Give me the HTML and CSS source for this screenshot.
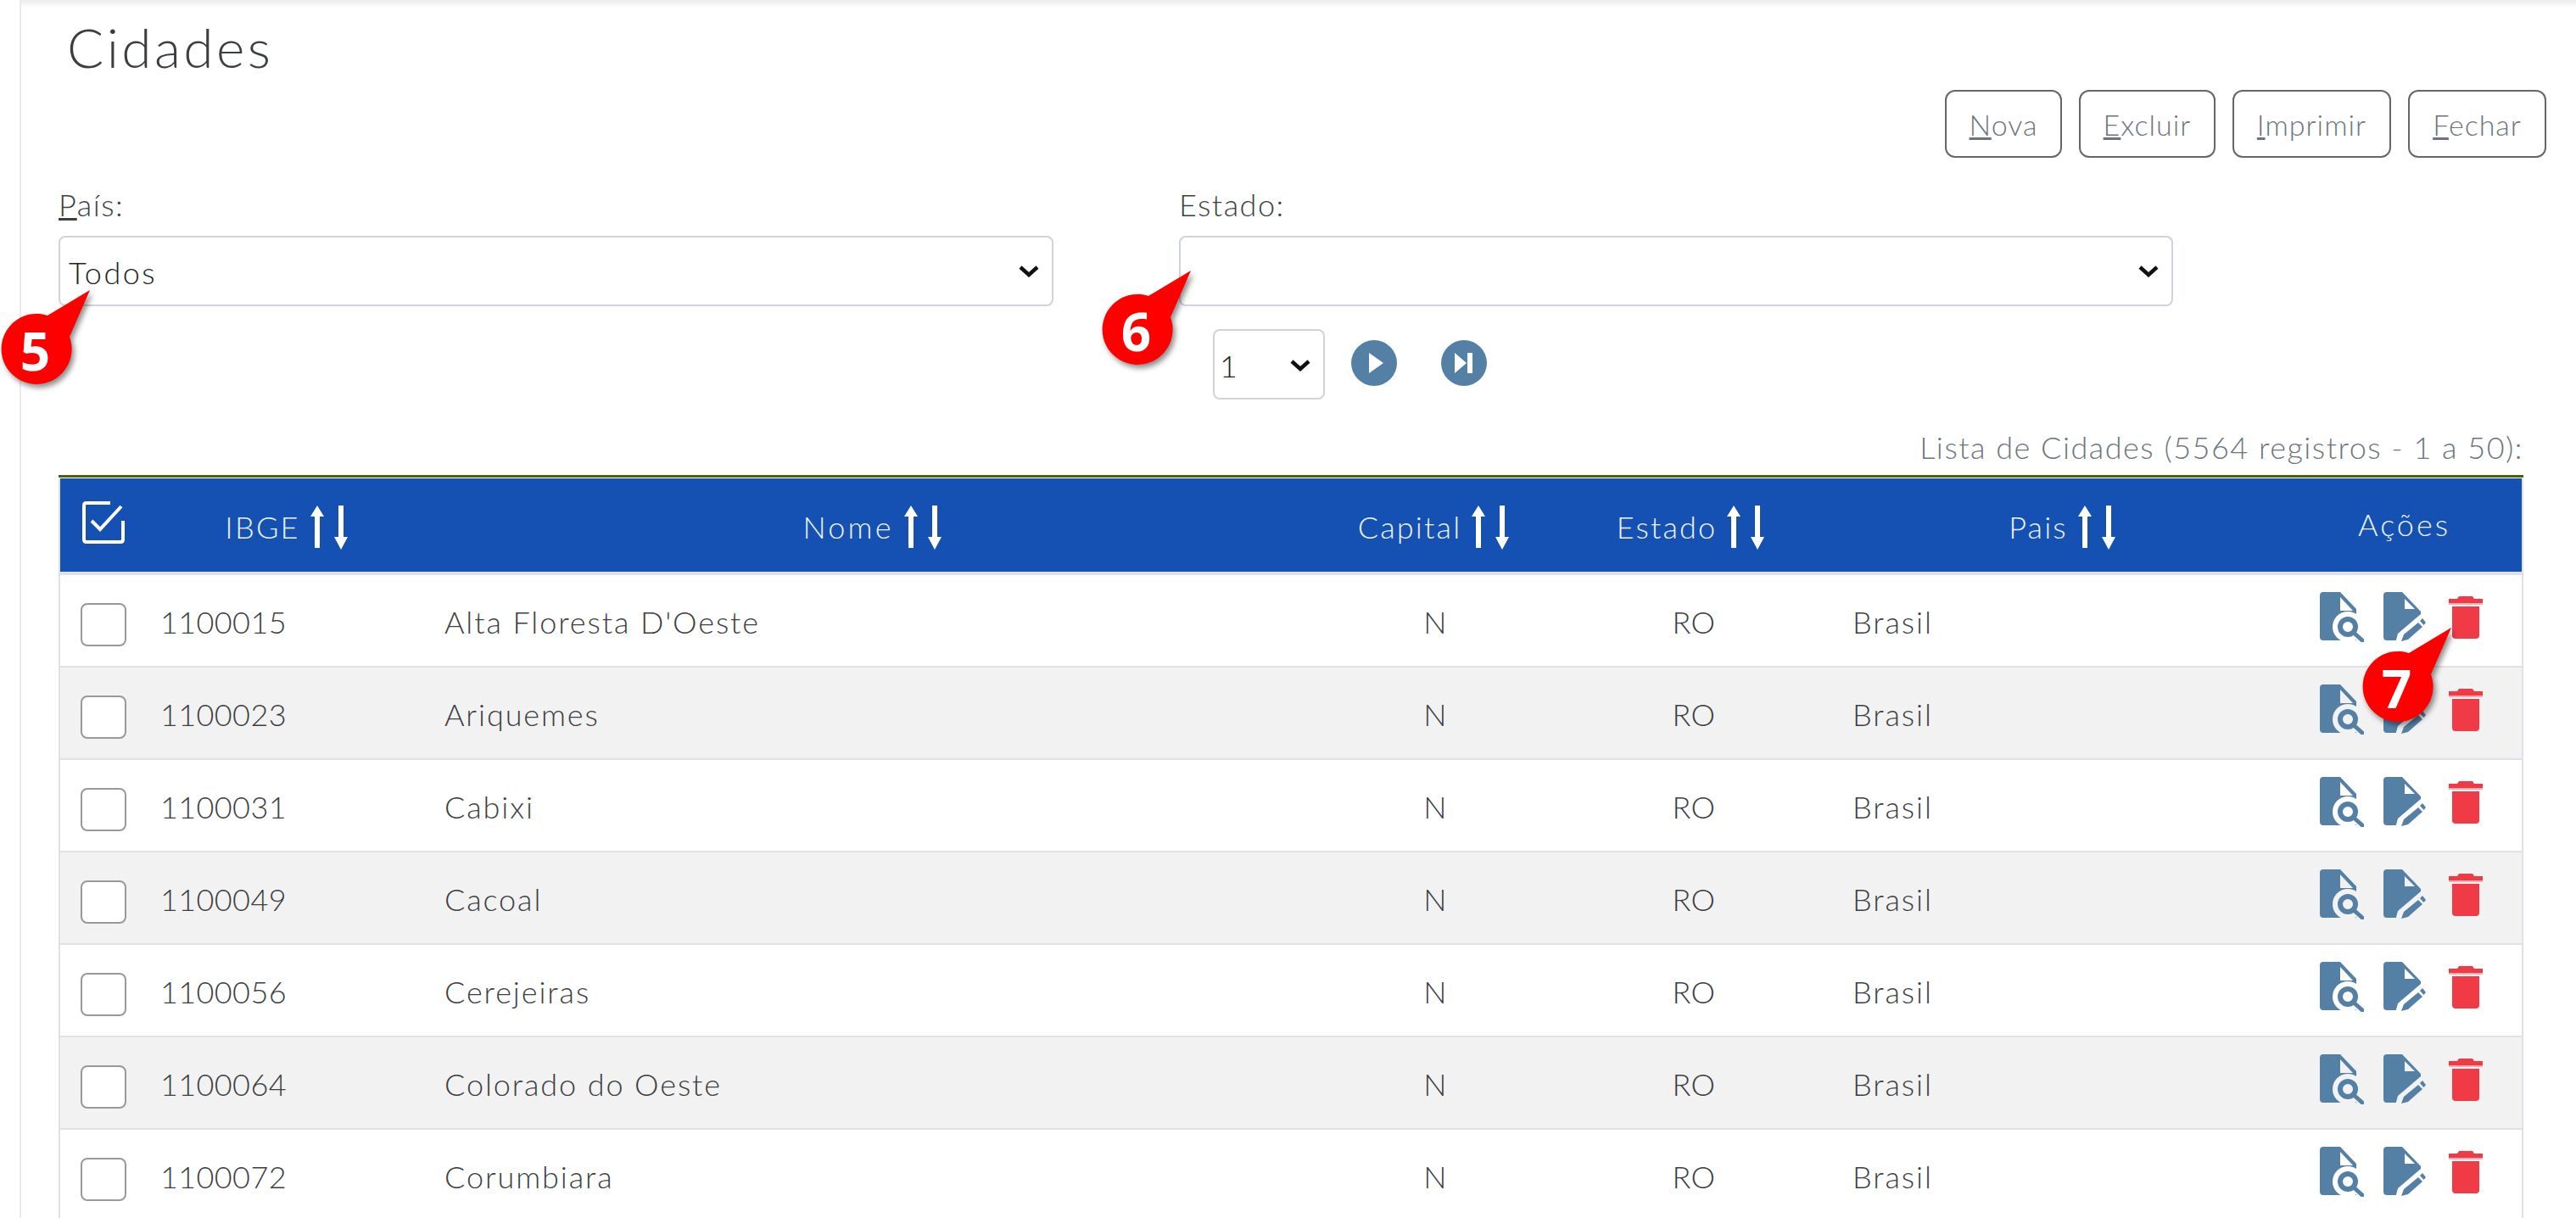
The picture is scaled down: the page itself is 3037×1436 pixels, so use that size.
FILE: index.html
```html
<!DOCTYPE html>
<html lang="pt-BR">
<head>
  <meta charset="UTF-8">
  <title>Cidades</title>
  <link rel="stylesheet" href="styles.css">
</head>
<body>
  <svg class="defs" width="0" height="0">
    <symbol id="i-up" viewBox="0 0 16 52"><path d="M8 0 16 13H11V50H5V13H0Z"/></symbol>
    <symbol id="i-down" viewBox="0 0 16 52"><path d="M5 0H11V37H16L8 52 0 37H5Z"/></symbol>
    <symbol id="i-chevron" viewBox="0 0 24 14"><path d="M2 2 12 11 22 2" fill="none" stroke="#111" stroke-width="4.5"/></symbol>
    <symbol id="i-search" viewBox="0 0 52 59">
      <path fill="#5580a6" d="M4 0H24L43 20V57H4Q0 57 0 53V4Q0 0 4 0Z"/>
      <path class="halo" d="M24 6V22H39Z"/>
      <circle class="halo" cx="33" cy="41" r="18"/>
      <path class="halo" d="M43 54 52 62V44H43Z"/>
      <circle cx="33" cy="41" r="9" fill="none" stroke="#5580a6" stroke-width="6"/>
      <path d="M40 48 50 57" fill="none" stroke="#5580a6" stroke-width="5" stroke-linecap="round"/>
    </symbol>
    <symbol id="i-edit" viewBox="0 0 50 59">
      <path fill="#5580a6" d="M4 0H22L44 23V57H4Q0 57 0 53V4Q0 0 4 0Z"/>
      <path class="halo" d="M25 8V20H37Z"/>
      <path class="halo" d="M14 60 17 49 44 26H52V63H14Z"/>
      <path d="M21 58 24 50 41 36 46 41 29 56Z" fill="#5580a6"/>
      <path d="M43 34 46 31 50 36 47.5 39Z" fill="#5580a6"/>
    </symbol>
    <symbol id="i-trash" viewBox="0 0 40 50">
      <path fill="#f03a45" d="M12 0H28L30 3H40V8H0V3H10Z"/>
      <path fill="#f7aab0" d="M0 8H40V10H0Z"/>
      <path fill="#f03a45" d="M4 12H36V46Q36 50 32 50H8Q4 50 4 46Z"/>
    </symbol>
  </svg>

  <main class="page">
    <h1 class="title">Cidades</h1>

    <div class="toolbar">
      <button class="btn btn-nova"><u>N</u>ova</button>
      <button class="btn btn-excluir"><u>E</u>xcluir</button>
      <button class="btn btn-imprimir"><u>I</u>mprimir</button>
      <button class="btn btn-fechar"><u>F</u>echar</button>
    </div>

    <div class="filters">
      <div class="field">
        <label for="pais"><u>P</u>aís:</label>
        <div class="select-box">
          <select id="pais"><option>Todos</option></select>
          <svg class="chevron"><use href="#i-chevron"/></svg>
        </div>
      </div>
      <div class="field">
        <label for="estado">Estado:</label>
        <div class="select-box">
          <select id="estado"><option></option></select>
          <svg class="chevron"><use href="#i-chevron"/></svg>
        </div>
      </div>
    </div>

    <div class="pager">
      <div class="select-box page-box">
        <select><option>1</option></select>
        <svg class="chevron"><use href="#i-chevron"/></svg>
      </div>
      <button class="round-btn" aria-label="Próxima">
        <svg viewBox="0 0 54 54"><path d="M21 15 38 27 21 39Z" fill="#fff"/></svg>
      </button>
      <button class="round-btn" aria-label="Última">
        <svg viewBox="0 0 54 54"><path d="M16 15 30 27 16 39ZM31 15H37V39H31Z" fill="#fff"/></svg>
      </button>
    </div>

    <p class="caption">Lista de Cidades (5564 registros - 1 a 50):</p>

    <div class="table-wrap">
      <table class="grid">
        <colgroup>
          <col class="c-check"><col class="c-ibge"><col class="c-nome"><col class="c-capital"><col class="c-estado"><col class="c-pais"><col class="c-acoes">
        </colgroup>
        <thead>
          <tr>
            <th class="check-head">
              <svg class="check-all" viewBox="0 0 50 50"><path d="M33 2H5Q2 2 2 5V45Q2 48 5 48H45Q48 48 48 45V23M11 23 21 33 46 6"/></svg>
            </th>
            <th class="h-ibge">IBGE<span class="sort"><svg><use href="#i-up"/></svg><svg><use href="#i-down"/></svg></span></th>
            <th class="h-nome">Nome<span class="sort"><svg><use href="#i-up"/></svg><svg><use href="#i-down"/></svg></span></th>
            <th class="h-capital">Capital<span class="sort"><svg><use href="#i-up"/></svg><svg><use href="#i-down"/></svg></span></th>
            <th class="h-estado">Estado<span class="sort"><svg><use href="#i-up"/></svg><svg><use href="#i-down"/></svg></span></th>
            <th class="h-pais">Pais<span class="sort"><svg><use href="#i-up"/></svg><svg><use href="#i-down"/></svg></span></th>
            <th class="h-acoes">Ações</th>
          </tr>
        </thead>
        <tbody>
          <tr>
            <td><input class="row-check" type="checkbox"></td><td class="code">1100015</td><td>Alta Floresta D'Oeste</td><td class="mid">N</td><td class="mid">RO</td><td>Brasil</td>
            <td class="actions"><svg class="a-search"><use href="#i-search"/></svg><svg class="a-edit"><use href="#i-edit"/></svg><svg class="a-trash"><use href="#i-trash"/></svg></td>
          </tr>
          <tr>
            <td><input class="row-check" type="checkbox"></td><td class="code">1100023</td><td>Ariquemes</td><td class="mid">N</td><td class="mid">RO</td><td>Brasil</td>
            <td class="actions"><svg class="a-search"><use href="#i-search"/></svg><svg class="a-edit"><use href="#i-edit"/></svg><svg class="a-trash"><use href="#i-trash"/></svg></td>
          </tr>
          <tr>
            <td><input class="row-check" type="checkbox"></td><td class="code">1100031</td><td>Cabixi</td><td class="mid">N</td><td class="mid">RO</td><td>Brasil</td>
            <td class="actions"><svg class="a-search"><use href="#i-search"/></svg><svg class="a-edit"><use href="#i-edit"/></svg><svg class="a-trash"><use href="#i-trash"/></svg></td>
          </tr>
          <tr>
            <td><input class="row-check" type="checkbox"></td><td class="code">1100049</td><td>Cacoal</td><td class="mid">N</td><td class="mid">RO</td><td>Brasil</td>
            <td class="actions"><svg class="a-search"><use href="#i-search"/></svg><svg class="a-edit"><use href="#i-edit"/></svg><svg class="a-trash"><use href="#i-trash"/></svg></td>
          </tr>
          <tr>
            <td><input class="row-check" type="checkbox"></td><td class="code">1100056</td><td>Cerejeiras</td><td class="mid">N</td><td class="mid">RO</td><td>Brasil</td>
            <td class="actions"><svg class="a-search"><use href="#i-search"/></svg><svg class="a-edit"><use href="#i-edit"/></svg><svg class="a-trash"><use href="#i-trash"/></svg></td>
          </tr>
          <tr>
            <td><input class="row-check" type="checkbox"></td><td class="code">1100064</td><td>Colorado do Oeste</td><td class="mid">N</td><td class="mid">RO</td><td>Brasil</td>
            <td class="actions"><svg class="a-search"><use href="#i-search"/></svg><svg class="a-edit"><use href="#i-edit"/></svg><svg class="a-trash"><use href="#i-trash"/></svg></td>
          </tr>
          <tr>
            <td><input class="row-check" type="checkbox"></td><td class="code">1100072</td><td>Corumbiara</td><td class="mid">N</td><td class="mid">RO</td><td>Brasil</td>
            <td class="actions"><svg class="a-search"><use href="#i-search"/></svg><svg class="a-edit"><use href="#i-edit"/></svg><svg class="a-trash"><use href="#i-trash"/></svg></td>
          </tr>
        </tbody>
      </table>
    </div>
  </main>

  <!-- marcadores do tutorial, por cima da tela -->
  <div class="marker marker-5">
    <svg viewBox="0 0 114 114"><path d="M56 30 106 0 82 55A41.5 41.5 0 1 1 56 30Z"/></svg>
    <span>5</span>
  </div>
  <div class="marker marker-6">
    <svg viewBox="0 0 114 114"><path d="M56 30 106 0 82 55A41.5 41.5 0 1 1 56 30Z"/></svg>
    <span>6</span>
  </div>
  <div class="marker marker-7">
    <svg viewBox="0 0 114 114"><path d="M56 30 106 0 82 55A41.5 41.5 0 1 1 56 30Z"/></svg>
    <span>7</span>
  </div>
</body>
</html>
```

FILE: styles.css
```css
html, body { margin: 0; height: 1436px; overflow: hidden; background: #fff; }
body { position: relative; font-family: "Lato", "Open Sans", sans-serif; font-weight: 300; font-size: 36px; color: #3c3f42; }
.defs { position: absolute; }
.halo { fill: var(--halo, #fff); }

.page { margin-left: 23px; border-left: 2px solid #e9ecef; padding: 8px 35px 0 44px; box-shadow: inset 0 12px 10px -10px rgba(0,0,0,.12); }
.title { margin: 0 0 2px; padding-left: 10px; font-size: 64px; font-weight: 300; line-height: 96px; letter-spacing: 3.4px; }

.toolbar { display: flex; justify-content: flex-end; gap: 20px; }
.btn { height: 80px; box-sizing: border-box; padding: 0; background: #fff; border: 2px solid #666; border-radius: 12px; font: inherit; font-size: 34px; letter-spacing: 1px; color: #6c757d; }
.btn-nova { width: 138px; }
.btn-excluir { width: 161px; }
.btn-imprimir { width: 187px; }
.btn-fechar { width: 163px; }

.filters { display: grid; grid-template-columns: 1173px 1172px; column-gap: 148px; margin-top: 33px; }
.field label { display: block; height: 44px; line-height: 44px; margin-bottom: 15px; letter-spacing: 1.5px; }
.select-box { position: relative; }
.select-box select { appearance: none; display: block; width: 100%; height: 83px; box-sizing: border-box; padding: 3px 4px 0 10px; background: #fff; border: 2px solid #ced4da; border-radius: 8px; font: inherit; letter-spacing: 2.5px; color: #222; }
.chevron { position: absolute; right: 17px; top: 35px; width: 24px; height: 14px; }

.pager { display: flex; align-items: center; margin: 27px 0 0 1361px; }
.page-box { width: 132px; margin-right: 31px; }
.page-box select { padding-left: 6px; }
.page-box .chevron { top: 36px; }
.round-btn { width: 54px; height: 54px; padding: 0; margin: 0 52px 4px 0; border: 0; border-radius: 50%; background: #5580a6; }
.round-btn svg { display: block; width: 54px; height: 54px; }

.caption { margin: 34px 27px 11px 0; line-height: 44px; text-align: right; letter-spacing: 1.5px; color: #6c757d; }

.table-wrap { margin-right: 27px; border-top: 3px solid #4f6200; padding-top: 1px; }
.grid { width: 2906px; table-layout: fixed; border-collapse: separate; border-spacing: 0; border-left: 2px solid #dee2e6; border-right: 2px solid #dee2e6; }
.c-check { width: 106px; }
.c-ibge { width: 335px; }
.c-nome { width: 1050px; }
.c-capital { width: 260px; }
.c-estado { width: 350px; }
.c-pais { width: 524px; }
.c-acoes { width: 277px; }

.grid th { box-sizing: border-box; height: 114px; padding: 14px 0 0; background: #1451b2; border-bottom: 4px solid #dee2e6; font-weight: 300; letter-spacing: 2.2px; color: #eef2f9; text-align: center; vertical-align: middle; }
.grid .h-ibge { padding-right: 14px; }
.grid .h-nome { padding-right: 18px; letter-spacing: 3.2px; }
.grid .h-capital { padding-right: 4px; }
.grid .h-estado { padding-right: 8px; }
.grid .h-pais { padding-right: 6px; }
.grid .h-acoes { padding: 0 0 2px; letter-spacing: 3px; }
.grid .check-head { padding-top: 6px; text-align: left; }
.check-all { display: block; width: 50px; height: 50px; margin: -12px 0 0 26px; fill: none; stroke: #fff; stroke-width: 4; }
.sort { display: inline-flex; gap: 12px; margin-left: 12px; vertical-align: middle; transform: translateY(-5px); }
.sort svg { width: 16px; height: 52px; fill: #fff; }

.grid td { box-sizing: border-box; height: 109px; padding: 3px 0 0 12px; border-bottom: 2px solid #dee2e6; letter-spacing: 1.9px; vertical-align: middle; }
.grid td.code { letter-spacing: .4px; }
.grid tbody tr:nth-child(even) td { background: #f2f2f2; }
.grid td:first-child { padding: 9px 0 0 24px; }
.grid td.mid { padding-left: 0; text-align: center; letter-spacing: .5px; }
.row-check { appearance: none; display: block; width: 54px; height: 51px; margin: 0; box-sizing: border-box; background: #fff; border: 2px solid #999; border-radius: 8px; }

.grid td.actions { padding: 0 0 8px 39px; }
.actions svg { display: inline-block; vertical-align: middle; }
.a-search { width: 52px; height: 59px; margin-right: 23px; }
.a-edit { width: 50px; height: 59px; margin-right: 27px; }
.a-trash { width: 40px; height: 50px; }
.grid tbody tr:nth-child(even) .actions { --halo: #f2f2f2; }

.marker { position: absolute; width: 114px; height: 114px; filter: drop-shadow(3px 4px 3px rgba(0,0,0,.45)); }
.marker svg { display: block; width: 114px; height: 114px; fill: #f00; }
.marker span { position: absolute; left: 0; top: 30px; width: 83px; height: 83px; line-height: 83px; text-align: center; font-family: "Open Sans", sans-serif; font-weight: 700; font-size: 62px; color: #fff; }
.marker-5 { left: 0; top: 342px; }
.marker-6 { left: 1298px; top: 319px; }
.marker-7 { left: 2784px; top: 740px; }
```
